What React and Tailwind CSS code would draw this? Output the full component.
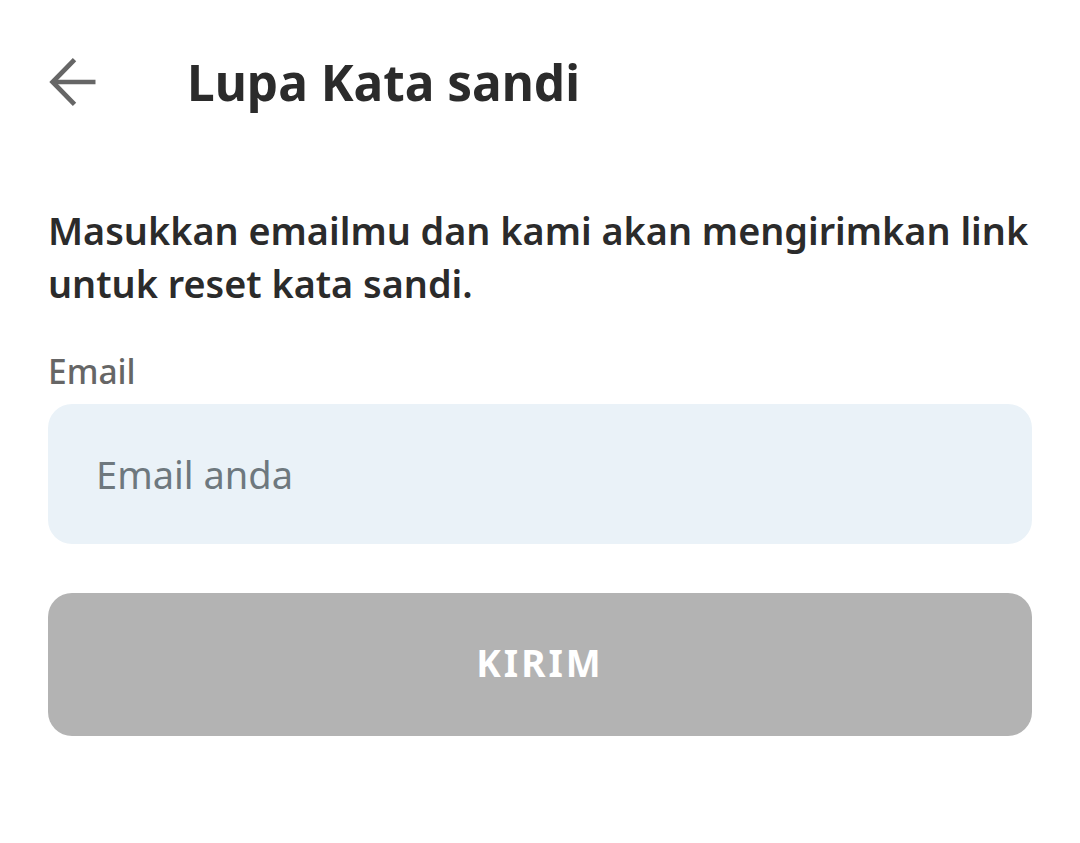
import { useState } from "react";

const BackArrow = () => (
  <svg width="54" height="54" viewBox="0 0 24 24" fill="none" stroke="#666666" strokeWidth="2.1" strokeLinecap="square">
    <path d="M20.5 12H3.5" />
    <path d="M11.5 2.8L2.5 12L11.5 21.2" />
  </svg>
);

const App = () => {
  const [email, setEmail] = useState("");

  return (
    <main
      className="min-h-[843px] w-[1080px] bg-white px-12 text-[#2b2b2b]"
      style={{ fontFamily: '"Noto Sans", "Open Sans", sans-serif' }}
    >
      {/* header */}
      <nav className="flex items-center pt-[54px]">
        <button className="-ml-[1px] flex h-[56px] w-[56px] items-center">
          <BackArrow />
        </button>
        <h1 className="ml-[84px] text-[49.5px] font-bold leading-[56px]">Lupa Kata sandi</h1>
      </nav>

      <p className="-mr-4 mt-[94px] text-[37.8px] font-semibold leading-[53px]">
        Masukkan emailmu dan kami akan mengirimkan link untuk reset kata sandi.
      </p>

      <label className="mt-[41px] block text-[33.5px] font-medium leading-[41px] text-[#666666]">Email</label>
      <input
        value={email}
        onChange={(e) => setEmail(e.target.value)}
        placeholder="Email anda"
        className="mt-[12px] h-[140px] w-full rounded-[24px] bg-[#eaf2f8] px-12 text-[38px] outline-none placeholder:text-[#6e787e]"
      />

      <button className="mt-[49px] flex h-[143px] w-full items-center justify-center rounded-[24px] bg-[#b3b3b3] pb-[4px] text-[37px] font-bold tracking-[3px] text-white">
        KIRIM
      </button>
    </main>
  );
};

export default App;
